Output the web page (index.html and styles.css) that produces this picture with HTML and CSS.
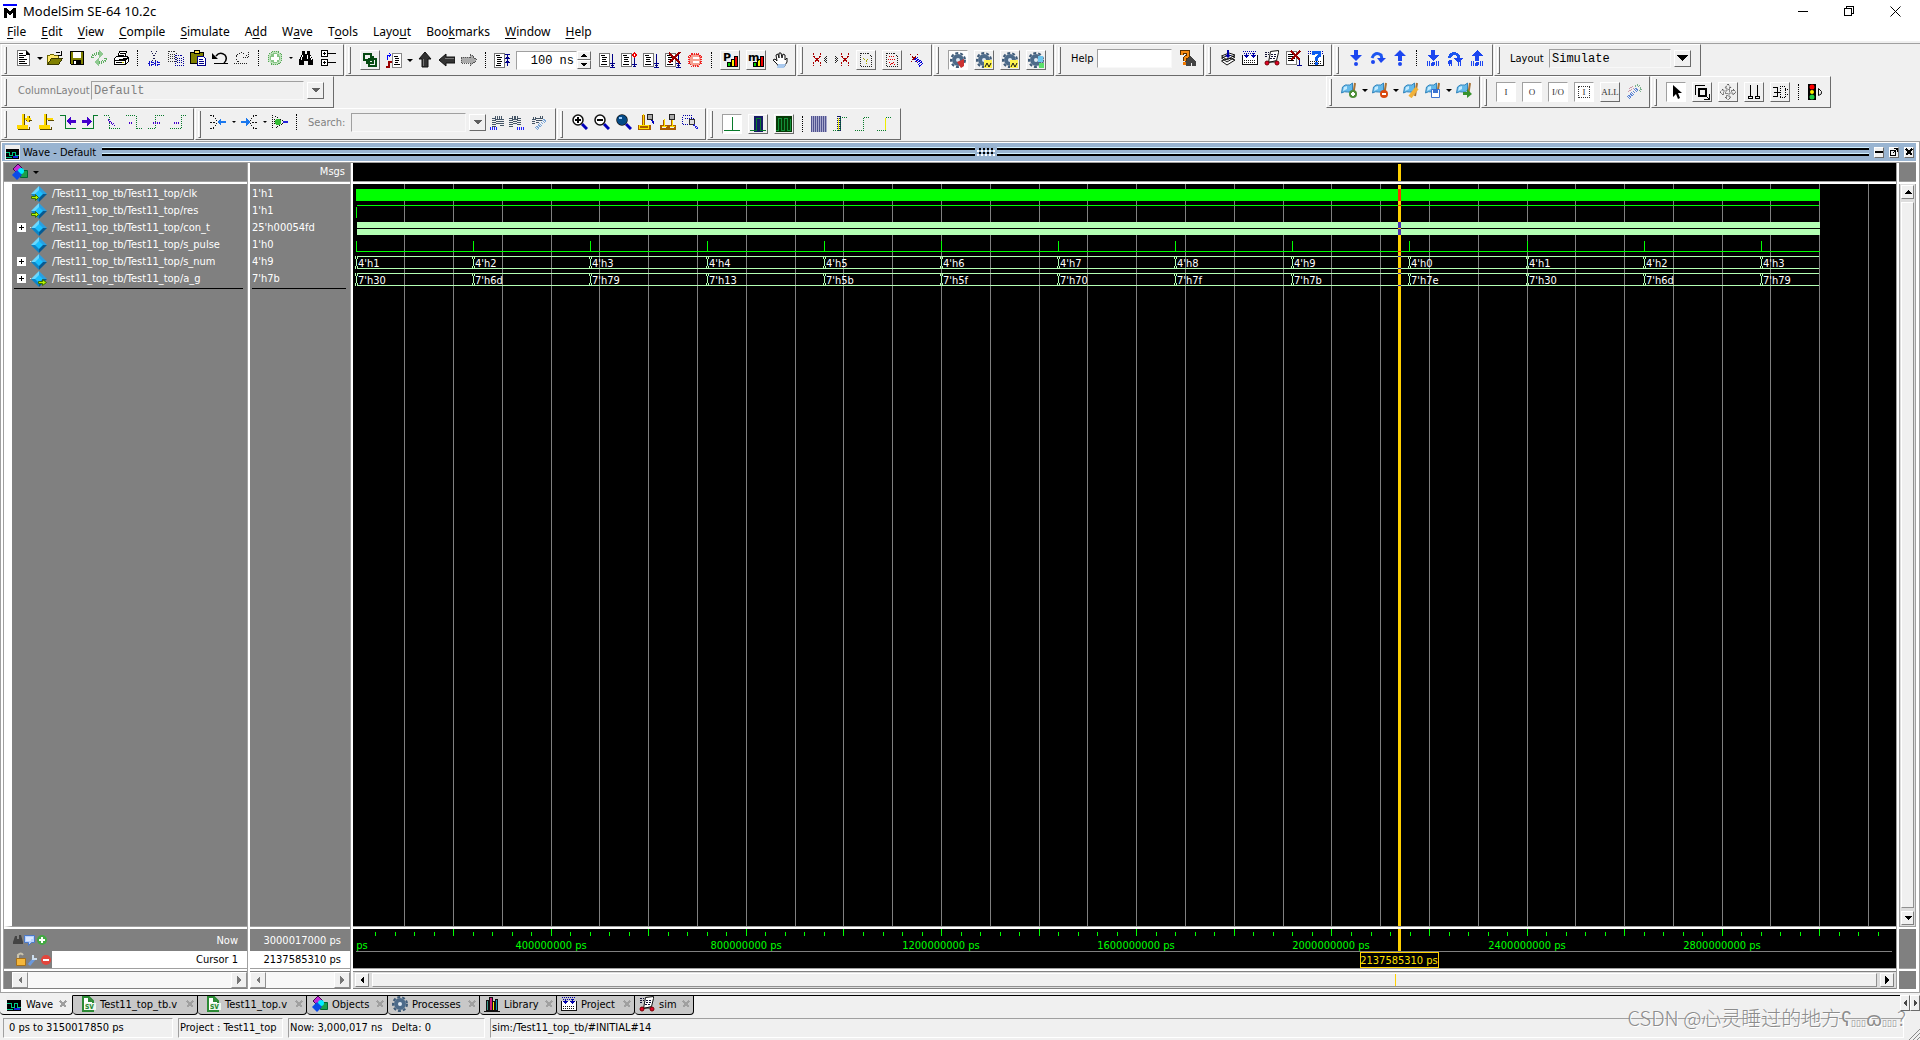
FILE: index.html
```html
<!DOCTYPE html>
<html lang="en">
<head>
<meta charset="utf-8">
<title>ModelSim SE-64 10.2c</title>
<link rel="stylesheet" href="styles.css">
</head>
<body>
<svg class="sprite" aria-hidden="true">
  <symbol id="new" viewBox="0 0 16 16"><path fill="#fff" stroke="#777" d="M1.500.5h9l3 3v12h-12z"/><path stroke="#000" d="M3 3.500h4M3 5.500h7M3 7.500h5M3 9.500h8M3 11.500h6M3 13.500h8M10.500 1v3H14"/></symbol>
  <symbol id="open" viewBox="0 0 16 16"><path fill="#ffe96a" stroke="#6b6400" d="M.5 14.500v-9h2l1-1h3l1 1h4v3"/><path fill="#808000" stroke="#3a3900" d="M.5 14.500l4-6h11l-4 6z"/><path fill="none" stroke="#000" d="M8.500 3.500q2-3 5 0M14.500 1v4h-4"/></symbol>
  <symbol id="save" viewBox="0 0 16 16"><path fill="#808000" stroke="#000" d="M1.500 1.500h13v13h-12l-1-1z"/><path fill="#fff" d="M4 2h8v6H4z"/><path fill="#000" d="M4 10h8v5H4z"/><path fill="#fff" d="M5 11h2v3H5z"/></symbol>
  <symbol id="refresh" viewBox="0 0 16 16"><path fill="none" stroke="#5fae62" stroke-width="3" stroke-dasharray="1 1" d="M1 8q2-6 9-4M15 8q-2 6-9 4"/><path fill="#8fc991" d="M8 0l5 4-5 4zM8 16l-5-4 5-4z"/></symbol>
  <symbol id="print" viewBox="0 0 16 16"><path fill="#fff" stroke="#000" d="M4.500 7.500l2-6h7l-2 6M1.500 8.500l2-2h10l2 1v4l-3 3h-11z"/><path stroke="#000" d="M7 3.500h5M6 5.500h5M1 10.500h11l3-3M12.500 10v4M3 12.500h8"/><path fill="#cc0" d="M9 12h2v1H9z"/></symbol>
  <symbol id="cut" viewBox="0 0 16 16"><g fill="none" stroke="#1b1b4e" stroke-dasharray="1 1"><path d="M5.500 1l4 10M10.500 1l-4 10"/><path stroke="#11c" stroke-width="2" d="M3 12h4v3H3zM9 12h4v3H9z"/></g></symbol>
  <symbol id="copy" viewBox="0 0 16 16"><g fill="none" stroke-dasharray="1 1"><path stroke="#333" d="M.5 1.500h6l2 2v8h-8zM2 4.500h5M2 6.500h5M2 8.500h5"/><path stroke="#009" d="M7.500 5.500h6l2 2v8h-8zM9 8.500h5M9 10.500h5M9 12.500h5"/></g></symbol>
  <symbol id="paste" viewBox="0 0 16 16"><path fill="#808000" stroke="#000" d="M.5 2.500h13v11H.5z"/><path fill="#ffe14a" stroke="#000" d="M4.500.5h5v3h-5z"/><path fill="#fff" stroke="#008" d="M7.500 6.500h6l2 2v7h-8z"/><path stroke="#008" d="M9 9.500h4M9 11.500h5M9 13.500h5"/></symbol>
  <symbol id="undo" viewBox="0 0 16 16"><path fill="none" stroke="#000" stroke-width="1.500" d="M4 6q4-5 9-1 3 4-1 8"/><path d="M0 3v6h6zM2 13h14v1H2z"/></symbol>
  <symbol id="redo" viewBox="0 0 16 16"><g fill="none" stroke="#222" stroke-dasharray="1 1"><path d="M13 6q-4-5-9-2-4 5 1 8M9 7.500h6M14.500 2v6M0 13.500h14"/></g></symbol>
  <symbol id="plus" viewBox="0 0 16 16"><circle cx="8" cy="8" r="7" fill="#bfe3bd" stroke="#56a556" stroke-dasharray="1 1"/><circle cx="8" cy="8" r="5" fill="#86c485"/><path stroke="#fff" stroke-width="3" d="M8 4v8M4 8h8"/></symbol>
  <symbol id="find" viewBox="0 0 16 16"><path d="M4 1h3v3h2V1h3v3l3 6v5h-5v-4H6v4H1v-5l3-6z"/><path stroke="#fff" d="M4.500 5L3 10M9.500 5v4M12.500 6l1 4"/></symbol>
  <symbol id="tree" viewBox="0 0 16 16"><path fill="#fff" stroke="#000" d="M1.500.5h6v6h-6zM1.500 9.500h6v6h-6z"/><path stroke="#000" d="M3 3.500h3M4.500 2v3M3 12.500h3M4.500 11v3M8 3.500h8M8 12.500h8"/></symbol>
  <symbol id="compile" viewBox="0 0 16 16"><g fill="none" stroke="#064a12" stroke-width="2"><path d="M2 2h7v6H2zM7 7h7v7H7zM5 8v3h6V5H9"/></g></symbol>
  <symbol id="env" viewBox="0 0 16 16"><path fill="#fff" stroke="#888" d="M6.500 1.500h9v14h-9z"/><path stroke="#000" d="M8 4.500h4M9 6.500h4M9 8.500h4M9 10.500h3M8 12.500h6"/><path fill="none" stroke="#00f" d="M1.500 8V3h3M3 1l2 2-2 2"/><path fill="none" stroke="#900" stroke-width="2" d="M0 15h3v-5h3"/></symbol>
  <symbol id="up" viewBox="0 0 16 16"><path fill="#333" stroke="#111" d="M8 0l6 7h-3v8H5V7H2z"/><path stroke="#777" d="M6.500 7v7"/></symbol>
  <symbol id="left" viewBox="0 0 16 16"><path fill="#333" stroke="#111" d="M0 8l7-6v3h9v6H7v3z"/><path stroke="#777" d="M6 6.500h9"/></symbol>
  <symbol id="right" viewBox="0 0 16 16"><path fill="#aaa" stroke="#555" stroke-dasharray="1 1" d="M16 8L9 2v3H0v6h9v3z"/></symbol>
  <symbol id="restart" viewBox="0 0 16 16"><path fill="#fff" stroke="#777" d="M.5 1.500h10v14H.5z"/><path stroke="#000" d="M2 3.500h4M3 5.500h5M3 7.500h4M3 9.500h5M3 11.500h4M2 13.500h5"/><path stroke="#008" d="M13.500 2v12M11 2.500h5M11 6.500h5M12 5.500h3M12 9.500h3M11 10.500h5"/></symbol>
  <symbol id="run" viewBox="0 0 16 16"><path fill="#fff" stroke="#777" d="M.5 1.500h10v13H.5z"/><path stroke="#000" d="M2 3.500h4M3 5.500h5M3 7.500h4M3 9.500h5M2 12.500h6"/><path stroke="#008" d="M13.500 2v13M11 11.500h5M12 13.500h3M11 15.500h5"/></symbol>
  <symbol id="cont" viewBox="0 0 16 16"><path fill="#fff" stroke="#777" d="M.5 1.500h10v13H.5z"/><path stroke="#000" d="M2 3.500h4M3 5.500h5M3 7.500h4M3 9.500h5M2 12.500h6"/><path fill="#fff" stroke="#e00" d="M13.500 1l2 2-2 2-2-2z"/><path stroke="#008" d="M13.500 6v9M11 12.500h5M12 14.500h3"/></symbol>
  <symbol id="runx" viewBox="0 0 16 16"><use href="#run"/><path stroke="#900" stroke-width="2" d="M4 1l11 10M15 0L4 11"/></symbol>
  <symbol id="break" viewBox="0 0 16 16"><path fill="#f5a090" stroke="#e22" stroke-dasharray="1 1" stroke-width="2" d="M5 2h6l3 3v6l-3 3H5l-3-3V5z"/><path stroke="#fff" stroke-width="2" d="M6 6h6M6 10h6"/></symbol>
  <symbol id="bargraph" viewBox="0 0 16 16"><path fill="#0c0" stroke="#000" d="M5.500 10.500h3v4h-3z"/><path fill="#fe0" stroke="#000" d="M9.500 7.500h3v7h-3z"/><path fill="#e00" stroke="#000" d="M12.500 4.500h3v10h-3z"/></symbol>
  <symbol id="prof" viewBox="0 0 16 16"><use href="#bargraph"/><text class="big" x="1" y="9">P</text></symbol>
  <symbol id="mem" viewBox="0 0 16 16"><use href="#bargraph"/><text class="big" x="0" y="9">m</text></symbol>
  <symbol id="hand" viewBox="0 0 16 16"><path fill="#fff" stroke="#111" d="M5 12L1 8l2-1 2 2-1-6 2-1 1 4V1h2l1 5 1-4 2 1v5l2-2v4l-3 5H7z"/><path fill="#a9c9ee" d="M6 12h8l-2 4H5z"/></symbol>
  <symbol id="xleft" viewBox="0 0 16 16"><path fill="none" stroke="#a00" stroke-dasharray="2 1" d="M1.500 1v3l7 7v3M8.500 1v3l-7 7v3"/><path stroke="#222" stroke-dasharray="1 1" d="M14.500 4v8M13.500 5v5M12.500 6v3"/></symbol>
  <symbol id="xright" viewBox="0 0 16 16"><path fill="none" stroke="#a00" stroke-dasharray="2 1" d="M7.500 1v3l7 7v3M14.500 1v3l-7 7v3"/><path stroke="#222" stroke-dasharray="1 1" d="M1.500 4v8M2.500 5v5M3.500 6v3"/></symbol>
  <symbol id="docq" viewBox="0 0 16 16"><path fill="none" stroke="#222" stroke-dasharray="1 1" d="M2.500 1.500h8l3 3v10h-11z"/><path fill="none" stroke="#aa0" stroke-dasharray="1 1" d="M5 6l3 3 3-3M8 9v4"/></symbol>
  <symbol id="docx" viewBox="0 0 16 16"><path fill="none" stroke="#222" stroke-dasharray="1 1" d="M2.500 1.500h8l3 3v10h-11z"/><path stroke="#d00" stroke-dasharray="1 1" d="M5 4.500h5M4 7.500h8M5 10l6 3M10 10l-4 3"/></symbol>
  <symbol id="xpen" viewBox="0 0 16 16"><path stroke="#900" stroke-dasharray="2 1" d="M2 2l8 9M10 2L2 11"/><path stroke="#00d" stroke-width="5" stroke-dasharray="1 1" d="M8 6l6 8"/></symbol>
  <symbol id="gear" viewBox="0 0 16 16"><circle cx="8" cy="8" r="7" fill="none" stroke="#3f5b78" stroke-width="2" stroke-dasharray="3 2"/><circle cx="8" cy="8" r="4" fill="#dfe9f2" stroke="#4d6b8a" stroke-width="4"/></symbol>
  <symbol id="gearr" viewBox="0 0 16 16"><use href="#gear"/><path fill="#c33" d="M7 10l7-3v7l-3 2z"/></symbol>
  <symbol id="geary" viewBox="0 0 16 16"><use href="#gear"/><path fill="#fff34d" d="M8 8h8v8H8z"/><path fill="none" stroke="#111" d="M9 15l2-4 2 4 2-4"/></symbol>
  <symbol id="gearg" viewBox="0 0 16 16"><use href="#gear"/><path fill="#6ec6ee" d="M10 4h5v6h-5z"/><path fill="#5be06a" d="M11 11h5v5h-5z"/></symbol>
  <symbol id="helpfind" viewBox="0 0 16 16"><path fill="#444" d="M7 5h3l1 2h1l4 5v4h-4v-3h-1v3H7l-3-1z"/><path fill="none" stroke="#5a3000" stroke-width="4" d="M2 5V2h6v4L5 8v3"/><path fill="none" stroke="#f88a10" stroke-width="2" d="M2 5V2h6v4L5 8v3"/><path fill="#f07800" d="M3 12h3v3H3z"/></symbol>
  <symbol id="stack" viewBox="0 0 16 16"><path fill="#fff" stroke="#111" d="M1.500 11L9 8l6 2-8 5zM1.500 8L9 5l6 2-8 5zM1.500 6L9 3l6 2-8 5z"/><path stroke="#00a" stroke-width="2" d="M8 0v6"/><path fill="#00a" d="M5 5h6L8 8z"/></symbol>
  <symbol id="proj" viewBox="0 0 16 16"><path fill="#fff" stroke="#111" d="M.5 5v9.500h15V5"/><path stroke="#00a" stroke-dasharray="1 1" d="M1 1.500h14M2 3.500h12"/><path fill="#00a" d="M4 3h1v2h2L4.500 8 2 5h2zM11 3h1v2h2l-2.500 3L9 5h2z"/><path stroke="#111" stroke-dasharray="1 1" d="M2 10.500h12M2 12.500h12"/></symbol>
  <symbol id="simi" viewBox="0 0 16 16"><path fill="#fff" stroke="#111" d="M6.500 1.500l8-1v2l-2 8-8 2z"/><path stroke="#113" stroke-dasharray="2 1" d="M1 2.500h4M1 4.500h4M1 6.500h3M7 4.500h6M7 6.500h5M6 8.500h6"/><path stroke="#111" d="M2 12h12"/><g fill="#e0002a" stroke="#700"><circle cx="3" cy="13" r="2"/><circle cx="13" cy="13" r="2"/></g></symbol>
  <symbol id="endsim" viewBox="0 0 16 16"><path fill="#fff" stroke="#777" d="M.5 1.500h10v13H.5z"/><path stroke="#000" d="M2 4.500h7M2 6.500h6M2 8.500h7M2 10.500h6"/><path stroke="#900" stroke-width="2" d="M5 1l9 9M14 1l-9 9"/><path stroke="#008" d="M13.500 10v5M11 15.500h5"/></symbol>
  <symbol id="what" viewBox="0 0 16 16"><path fill="#fff" stroke="#111" d="M.5 5v10.500h15V5"/><path stroke="#00a" stroke-dasharray="1 1" d="M0 1.500h16M0 3.500h16"/><path stroke="#111" stroke-dasharray="1 1" d="M2 11.500h12M2 13.500h12"/><path fill="none" stroke="#0a5cf0" stroke-width="3" d="M5 5V2h6v4L8 8v3"/><path fill="#0a5cf0" d="M7 12h3v3H7z"/></symbol>
  <symbol id="into" viewBox="0 0 16 16"><path fill="#1c46f0" d="M6 0h4v5h4l-6 6-6-6h4z"/><circle cx="8" cy="14" r="2" fill="#1c46f0"/></symbol>
  <symbol id="over" viewBox="0 0 16 16"><path fill="none" stroke="#1c56f0" stroke-width="3" d="M2 8q3-7 9-3l1 4"/><path fill="#1c46f0" d="M7 8h9l-5 5z"/><circle cx="3" cy="12" r="2" fill="#1c46f0"/></symbol>
  <symbol id="out" viewBox="0 0 16 16"><path fill="#1c46f0" d="M8 0l6 6h-4v5H6V6H2z"/><circle cx="8" cy="14" r="2" fill="#1c46f0"/></symbol>
  <symbol id="bars" viewBox="0 0 16 16"><path stroke="#1c46f0" d="M2.500 11v5M4.500 11v5M11.500 11v5M13.500 11v5"/></symbol>
  <symbol id="flag" viewBox="0 0 16 16"><path fill="#63b9ea" stroke="#3484bb" d="M1.500 5q3-3 5-2t5-2v7q-2 3-5 2t-6 1z"/><path fill="#c5ebff" d="M3 5l3-1v3L2 9z"/><path stroke="#a87335" stroke-width="2" d="M14 1l-2 13"/></symbol>
  <symbol id="flagp" viewBox="0 0 16 16"><use href="#flag"/><circle cx="12" cy="12" r="4" fill="#4b8d35"/><path stroke="#fff" stroke-width="2" d="M12 10v4M10 12h4"/></symbol>
  <symbol id="flagm" viewBox="0 0 16 16"><use href="#flag"/><circle cx="12" cy="12" r="4" fill="#d9480f"/><path stroke="#fff" stroke-width="2" d="M10 12h4"/></symbol>
  <symbol id="flage" viewBox="0 0 16 16"><use href="#flag"/><path stroke="#f1b23a" stroke-width="4" d="M7 15l7-9"/></symbol>
  <symbol id="flags" viewBox="0 0 16 16"><use href="#flag"/><path fill="#fff" stroke="#3b73d1" d="M6.500 7.500h8v8h-8z"/><path fill="#3b73d1" d="M8 8h5v3H8z"/></symbol>
  <symbol id="flagg" viewBox="0 0 16 16"><use href="#flag"/><path fill="#37922d" d="M7 10h4V7l5 5-5 4v-3H7z"/></symbol>
  <symbol id="wrench" viewBox="0 0 16 16"><path stroke="#5d86d6" stroke-width="4" stroke-dasharray="1 1" d="M2 14l9-9"/><path fill="none" stroke="#7bb28c" stroke-width="2" stroke-dasharray="1 1" d="M9 2l3-1 3 3-1 4"/><path stroke="#c9a" stroke-dasharray="1 1" d="M3 5l5-4M2 8l7-5"/></symbol>
  <symbol id="arrow" viewBox="0 0 16 16"><path d="M5 1v12l3-3 2 5 2-1-2-5h4z"/></symbol>
  <symbol id="zoommode" viewBox="0 0 16 16"><path fill="none" stroke="#000" stroke-width="2" d="M5 5h7v7H5z"/><path fill="none" stroke="#000" d="M1.500 11V1.500H11M10 15.500h5.500V10M11 11l4 4"/></symbol>
  <symbol id="pan" viewBox="0 0 16 16"><path fill="none" stroke="#222" stroke-dasharray="1 1" d="M8 0l3 4H9v3h4V5l3 3-3 3V9H9v4h2l-3 3-3-3h2V9H3v2L0 8l3-3v2h4V4H5z"/></symbol>
  <symbol id="two" viewBox="0 0 16 16"><path fill="none" stroke="#000" d="M4.500 1v11M2.500 12.500h4v2h-4zM11.500 1v11M9.500 12.500h4v2h-4z"/></symbol>
  <symbol id="edit2" viewBox="0 0 16 16"><path fill="none" stroke="#000" d="M1 3.500h4v9H1M2 8h6"/><path fill="none" stroke="#000" stroke-dasharray="1 1" d="M8 2.500h5v11H8zM13 5.500h3M13 10.500h3"/></symbol>
  <symbol id="light" viewBox="0 0 16 16"><path d="M1 0h8v16H1z"/><circle cx="5" cy="3" r="2.500" fill="red"/><circle cx="5" cy="8" r="2" fill="#fe0"/><circle cx="5" cy="13" r="2.500" fill="#2c4"/><path fill="none" stroke="#111" d="M11.500 4.500v7q4-1 3-4z"/></symbol>
  <symbol id="curp" viewBox="0 0 16 16"><path fill="none" stroke="#5b4a00" d="M8 0v11M2 15.500h11v-3M10 6.500h6M13.500 2v6"/><path fill="none" stroke="#ffd800" stroke-width="2" d="M7 0v11M2 12h9v2H2zM9 5h6M12 2v6"/></symbol>
  <symbol id="curm" viewBox="0 0 16 16"><path fill="none" stroke="#5b4a00" d="M8 0v11M2 15.500h11v-3M10 6.500h6"/><path fill="none" stroke="#ffd800" stroke-width="2" d="M7 0v11M2 12h9v2H2zM9 5h6"/></symbol>
  <symbol id="prev" viewBox="0 0 16 16"><path fill="none" stroke="#077a2a" d="M0 1.500h5v13h11"/><path fill="#40c" d="M6 7l5-4v3h5v3h-5v3z"/></symbol>
  <symbol id="next" viewBox="0 0 16 16"><path fill="none" stroke="#077a2a" d="M0 14.500h11v-13h5"/><path fill="#40c" d="M10 7L5 3v3H0v3h5v3z"/></symbol>
  <symbol id="fall" viewBox="0 0 16 16"><g fill="none" stroke="#077a2a" stroke-dasharray="1 1"><path d="M0 1.500h5v13h11"/><path stroke="#40c" stroke-width="2" d="M4 6l7 6"/></g></symbol>
  <symbol id="fall2" viewBox="0 0 16 16"><g fill="none" stroke="#077a2a" stroke-dasharray="1 1"><path d="M0 1.500h10v13h6"/><path stroke="#40c" stroke-width="2" d="M3 9h4"/></g></symbol>
  <symbol id="rise" viewBox="0 0 16 16"><g fill="none" stroke="#077a2a" stroke-dasharray="1 1"><path d="M0 14.500h7v-13h9"/><path stroke="#40c" stroke-width="2" d="M5 9h7"/></g></symbol>
  <symbol id="rise2" viewBox="0 0 16 16"><g fill="none" stroke="#077a2a" stroke-dasharray="1 1"><path d="M0 14.500h11v-13h5"/><path stroke="#40c" stroke-width="2" d="M4 9h6"/></g></symbol>
  <symbol id="exp" viewBox="0 0 16 16"><path fill="none" stroke="#111" stroke-dasharray="2 1" d="M0 1.500h3l4 5M0 14.500h3l4-5M0 8h6"/><path fill="#1b78ee" d="M7 8l4-4v3h5v2h-5v3z"/></symbol>
  <symbol id="col" viewBox="0 0 16 16"><path fill="none" stroke="#111" stroke-dasharray="2 1" d="M16 1.500h-3l-4 5M16 14.500h-3l-4-5M16 8h-6"/><path fill="#1b78ee" d="M9 8L5 4v3H0v2h5v3z"/></symbol>
  <symbol id="ring" viewBox="0 0 16 16"><path fill="none" stroke="#111" stroke-dasharray="1 1" d="M.5 1v14M3 2l4 2 5 4-5 4-4 2M2 5v6"/><circle cx="6" cy="8" r="3" fill="#3b3"/><path fill="#22d" d="M11 7h5v2h-5z"/></symbol>
  <symbol id="bino" viewBox="0 0 16 16"><path fill="none" stroke="#456" stroke-width="4" stroke-dasharray="1 1" d="M4 13V4h4v7M12 12V4H8"/><path stroke="#22f" stroke-width="3" stroke-dasharray="1 1" d="M0 14h7"/></symbol>
  <symbol id="binor" viewBox="0 0 16 16"><path fill="none" stroke="#456" stroke-width="4" stroke-dasharray="1 1" d="M3 13V4h4v7M11 11V4H7"/><path stroke="#22f" stroke-width="3" stroke-dasharray="1 1" d="M9 14h7"/></symbol>
  <symbol id="binow" viewBox="0 0 16 16"><path fill="none" stroke="#456" stroke-width="3" stroke-dasharray="1 1" d="M2 10V4h4v5M9 7V3h3"/><path stroke="#79a6d8" stroke-width="3" stroke-dasharray="1 1" d="M5 15l9-9"/></symbol>
  <symbol id="lens" viewBox="0 0 16 16"><path stroke="#00b" stroke-width="3" d="M10 10l5 5"/><circle cx="6" cy="6" r="5" fill="#fff" stroke="#111" stroke-width="1.500"/></symbol>
  <symbol id="zin" viewBox="0 0 16 16"><use href="#lens"/><path stroke="#000" stroke-width="2" d="M6 3v6M3 6h6"/></symbol>
  <symbol id="zout" viewBox="0 0 16 16"><use href="#lens"/><path stroke="#000" stroke-width="2" d="M3 6h6"/></symbol>
  <symbol id="zfull" viewBox="0 0 16 16"><use href="#lens"/><circle cx="6" cy="6" r="5" fill="#054a86"/><path fill="#9cf" d="M3 3h3v2H3z"/></symbol>
  <symbol id="zcur" viewBox="0 0 16 16"><path fill="none" stroke="#a85b00" stroke-width="3" d="M5 1v10M1 12h10v3H1z"/><path fill="none" stroke="#ffe000" d="M5.500 0v11M1.500 11.500h9v3h-9z"/><circle cx="12" cy="3" r="3" fill="#aaa" stroke="#222"/><path stroke="#00b" stroke-width="2" d="M14 6l2 4"/></symbol>
  <symbol id="ztwo" viewBox="0 0 16 16"><path fill="none" stroke="#a85b00" stroke-width="2" d="M4 6v6M1 12h6v3H1zM12 6v6M9 12h6v3H9z"/><path fill="none" stroke="#ffe000" d="M4.500 5v7M1.500 12.500h5M12.500 5v7M9.500 12.500h5"/><circle cx="12" cy="3" r="3" fill="#aaa" stroke="#222"/></symbol>
  <symbol id="zbox" viewBox="0 0 16 16"><path fill="none" stroke="#00a" stroke-dasharray="1 1" d="M.5 1.500h9v9h-9zM3 4h9"/><circle cx="10" cy="8" r="3" fill="#ddd" stroke="#333"/><path stroke="#22d" stroke-width="2" stroke-dasharray="1 1" d="M12 11l4 4"/></symbol>
  <symbol id="w1" viewBox="0 0 16 16"><path stroke="#077a2a" d="M0 14.500h16M8.500 1v13"/></symbol>
  <symbol id="w2" viewBox="0 0 16 16"><path fill="#161a66" d="M4 0h9v16H4z"/><path fill="none" stroke="#077a2a" d="M0 14.500h6.500v-12h4v12H16"/></symbol>
  <symbol id="w3" viewBox="0 0 16 16"><path fill="#053a05" d="M0 0h16v16H0z"/><path fill="none" stroke="#13913a" d="M0 14.500h2.500v-12h3v12h3v-12h3v12h3v-12"/></symbol>
  <symbol id="w4" viewBox="0 0 16 16"><path fill="#a9aace" d="M0 0h16v16H0z"/><path stroke="#161a66" stroke-width="16" stroke-dasharray="1 1" opacity=".6" d="M0 8h16"/></symbol>
  <symbol id="w5" viewBox="0 0 16 16"><path stroke="#161a66" stroke-width="4" stroke-dasharray="1 1" d="M6 0v16"/><path fill="none" stroke="#077a2a" stroke-dasharray="1 1" d="M0 14.500h7v-13h7"/><path stroke="#ee0" d="M5.500 2v12"/></symbol>
  <symbol id="w6" viewBox="0 0 16 16"><path fill="none" stroke="#077a2a" stroke-dasharray="1 1" d="M0 14.500h8v-13h7"/></symbol>
  <symbol id="w7" viewBox="0 0 16 16"><path fill="none" stroke="#077a2a" stroke-dasharray="1 1" d="M0 14.500h8v-13h7"/><path stroke="#ee0" d="M8.500 2v12"/></symbol>
  <symbol id="wave" viewBox="0 0 16 16"><path fill="#eee" d="M0 0h16v16H0z"/><path d="M1 4h14v11H1z"/><path fill="none" stroke="#0c8" d="M1 7.500h4v4h3v-4h3v4h4M1 13.500h6"/><path stroke="#12d" stroke-width="2" d="M8 13h6"/></symbol>
  <symbol id="objs" viewBox="0 0 16 16"><path fill="#c42bd6" stroke="#400a50" d="M6 0l5 5-5 5-5-5z"/><path fill="#1ca04a" stroke="#063" d="M8.500 6.500h7v7h-7z"/><circle cx="9" cy="7" r="3" fill="#0ef"/><path fill="#0a4be8" d="M5 6l5 5-5 5-5-5z"/></symbol>
  <symbol id="sig" viewBox="0 0 16 16"><path fill="#6ad8ff" d="M8 0L0 8h8z"/><path fill="#2a9fe0" d="M8 0l8 8H8z"/><path fill="#0c84c6" d="M0 8l8 8V8z"/><path fill="#075a92" d="M16 8l-8 8V8z"/><path fill="#19c0ff" d="M8 4l4 4-4 4-4-4z"/></symbol>
  <symbol id="sigin" viewBox="0 0 16 16"><use href="#sig"/><path fill="#b4f400" stroke="#3d6e00" d="M.5 10.500h4v-2l3 3-3 3v-2h-4z"/></symbol>
  <symbol id="sigout" viewBox="0 0 16 16"><use href="#sig"/><path fill="#b4f400" stroke="#3d6e00" d="M7.500 10.500h4v-2l4 3-4 3v-2h-4z"/></symbol>
  <symbol id="sv" viewBox="0 0 16 16"><path fill="#fff" stroke="#2c8a35" stroke-width="2" d="M3 1h6l4 4v10H3z"/><path fill="#2c8a35" d="M8 1l5 5H8z"/><path fill="#eef8ee" d="M5 7h11v7H5z"/><text class="svt" x="5" y="13">sv</text></symbol>
  <symbol id="lib" viewBox="0 0 16 16"><path stroke="#111" d="M0 15h16"/><path fill="#3a9a8a" stroke="#111" d="M2.500 4.500h2v10h-2z"/><path fill="#d0207a" stroke="#111" d="M5.500 1.500h3v13h-3z"/><path fill="#fe0" stroke="#111" d="M8.500 5.500h2v9h-2z"/><path fill="#19b" stroke="#111" d="M11.500 3.500h2v11h-2z"/></symbol>
  <symbol id="x" viewBox="0 0 8 8"><path stroke="#a0a0a0" stroke-width="2" d="M1 1l6 6M7 1L1 7"/></symbol>
  <symbol id="dn" viewBox="0 0 8 8"><path d="M0 2h8L4 6z"/></symbol>
  <symbol id="tl" viewBox="0 0 8 8"><path d="M6 0v8L2 4z"/></symbol>
  <symbol id="tr" viewBox="0 0 8 8"><path d="M2 0v8l4-4z"/></symbol>
  <symbol id="tu" viewBox="0 0 8 8"><path d="M0 6h8L4 2z"/></symbol>
  <symbol id="bx" viewBox="0 0 5 13"><path fill="none" stroke="#b4ffb4" d="M1.500 0v3M3.500 0v3M2.500 3v7M1.500 10v3M3.500 10v3"/></symbol>
</svg>

<header class="titlebar">
  <svg class="logo" viewBox="0 0 14 14"><path fill="#00f" d="M0 0h14v2H0z"/><path d="M1 14V4h3l3 4 3-4h3v10h-3V8l-3 4-3-4v6z"/></svg>
  <h1>ModelSim SE-64 10.2c</h1>
  <div class="winctl">
    <button aria-label="Minimize"><svg viewBox="0 0 11 11"><path fill="none" stroke="#000" d="M0 5.500h10"/></svg></button>
    <button aria-label="Restore"><svg viewBox="0 0 11 11"><path fill="none" stroke="#000" d="M.5 2.500h7v7h-7zM2.500 2V.5h7v7H8"/></svg></button>
    <button aria-label="Close"><svg class="smooth" viewBox="0 0 11 11"><path fill="none" stroke="#000" d="M.5.5l10 10M10.500.5l-10 10"/></svg></button>
  </div>
</header>
<nav class="menu">
  <button><u>F</u>ile</button><button><u>E</u>dit</button><button><u>V</u>iew</button><button><u>C</u>ompile</button><button><u>S</u>imulate</button><button>A<u>d</u>d</button><button>W<u>a</u>ve</button><button>T<u>o</u>ols</button><button>Layo<u>u</u>t</button><button>Boo<u>k</u>marks</button><button><u>W</u>indow</button><button><u>H</u>elp</button>
</nav>

<div class="tools">
  <div class="row">
    <div class="bar high"><i class="grip"></i>
      <button class="ic" aria-label="New"><svg><use href="#new"/></svg></button><button class="car" aria-label="New menu"></button><button class="ic" aria-label="Open"><svg><use href="#open"/></svg></button><button class="ic" aria-label="Save"><svg><use href="#save"/></svg></button><button class="ic" aria-label="Reload"><svg><use href="#refresh"/></svg></button><button class="ic" aria-label="Print"><svg><use href="#print"/></svg></button><i class="sep"></i><button class="ic" aria-label="Cut"><svg><use href="#cut"/></svg></button><button class="ic" aria-label="Copy"><svg><use href="#copy"/></svg></button><button class="ic" aria-label="Paste"><svg><use href="#paste"/></svg></button><button class="ic" aria-label="Undo"><svg class="smooth"><use href="#undo"/></svg></button><button class="ic" aria-label="Redo"><svg><use href="#redo"/></svg></button><i class="sep"></i><button class="ic" aria-label="Add"><svg><use href="#plus"/></svg></button><button class="car dim" aria-label="Add menu"></button><button class="ic" aria-label="Find"><svg><use href="#find"/></svg></button><button class="ic" aria-label="Collapse all"><svg><use href="#tree"/></svg></button>
    </div>
    <div class="bar"><i class="grip"></i>
      <button class="rb" aria-label="Compile"><svg><use href="#compile"/></svg></button><button class="ic" aria-label="Environment"><svg><use href="#env"/></svg></button><button class="car" aria-label="Environment menu"></button><button class="ic" aria-label="Up"><svg class="smooth"><use href="#up"/></svg></button><button class="ic" aria-label="Back"><svg class="smooth"><use href="#left"/></svg></button><button class="ic" aria-label="Forward"><svg><use href="#right"/></svg></button><i class="sep"></i><button class="ic" aria-label="Restart"><svg><use href="#restart"/></svg></button><input class="runlen" aria-label="Run length" value="100 ns"><span class="spin"><button aria-label="More"><svg><use href="#tu"/></svg></button><button aria-label="Less"><svg><use href="#dn"/></svg></button></span><button class="ic" aria-label="Run"><svg><use href="#run"/></svg></button><button class="ic" aria-label="Continue run"><svg><use href="#cont"/></svg></button><button class="ic" aria-label="Run all"><svg><use href="#run"/></svg></button><button class="ic" aria-label="Break"><svg><use href="#runx"/></svg></button><button class="ic" aria-label="Stop"><svg><use href="#break"/></svg></button><i class="sep"></i><button class="rb" aria-label="Performance profiling"><svg><use href="#prof"/></svg></button><button class="rb" aria-label="Memory profiling"><svg><use href="#mem"/></svg></button><button class="ic" aria-label="Pan"><svg class="smooth"><use href="#hand"/></svg></button>
    </div>
    <div class="bar"><i class="grip"></i>
      <button class="ic" aria-label="Previous X"><svg><use href="#xleft"/></svg></button><button class="ic" aria-label="Next X"><svg><use href="#xright"/></svg></button><button class="rb" aria-label="Explain"><svg><use href="#docq"/></svg></button><button class="rb" aria-label="Exclude"><svg><use href="#docx"/></svg></button><button class="ic" aria-label="Clear"><svg><use href="#xpen"/></svg></button>
    </div>
    <div class="bar"><i class="grip"></i>
      <button class="rb on" aria-label="Processes"><svg class="smooth"><use href="#gearr"/></svg></button><button class="rb" aria-label="Process warnings"><svg class="smooth"><use href="#geary"/></svg></button><button class="rb" aria-label="Process waits"><svg class="smooth"><use href="#geary"/></svg></button><button class="rb" aria-label="Process states"><svg class="smooth"><use href="#gearg"/></svg></button>
    </div>
    <div class="bar high help"><i class="grip"></i>
      <label for="help">Help</label><input id="help" class="helpbox"><button class="ic" aria-label="Search help"><svg><use href="#helpfind"/></svg></button>
    </div>
    <div class="bar high"><i class="grip"></i>
      <button class="ic" aria-label="Compile file"><svg class="smooth"><use href="#stack"/></svg></button><button class="ic" aria-label="Compile all"><svg><use href="#proj"/></svg></button><button class="ic" aria-label="Simulate"><svg class="smooth"><use href="#simi"/></svg></button><button class="ic" aria-label="End simulation"><svg><use href="#endsim"/></svg></button><button class="ic" aria-label="Compile help"><svg><use href="#what"/></svg></button>
    </div>
    <div class="bar high"><i class="grip"></i>
      <button class="ic" aria-label="Step into"><svg class="smooth"><use href="#into"/></svg></button><button class="ic" aria-label="Step over"><svg class="smooth"><use href="#over"/></svg></button><button class="ic" aria-label="Step out"><svg class="smooth"><use href="#out"/></svg></button><i class="sep"></i><button class="ic" aria-label="Step into current"><svg><use href="#into"/><use href="#bars"/></svg></button><button class="ic" aria-label="Step over current"><svg><use href="#over"/><use href="#bars"/></svg></button><button class="ic" aria-label="Step out current"><svg><use href="#out"/><use href="#bars"/></svg></button>
    </div>
    <div class="bar high layout"><i class="grip"></i>
      <label for="layout">Layout</label><select id="layout" class="laysel"><option>Simulate</option></select><span class="drop"><svg><use href="#dn"/></svg></span>
    </div>
  </div>
  <div class="row">
    <div class="bar high collayout"><i class="grip"></i>
      <label for="collay" class="off">ColumnLayout</label><select id="collay" class="colsel" disabled><option>Default</option></select><span class="drop off"><svg><use href="#dn"/></svg></span>
    </div>
    <div class="bar high push"><i class="grip"></i>
      <button class="ic" aria-label="Add bookmark"><svg class="smooth"><use href="#flagp"/></svg></button><button class="car" aria-label="Add bookmark menu"></button><button class="ic" aria-label="Delete bookmark"><svg class="smooth"><use href="#flagm"/></svg></button><button class="car" aria-label="Delete bookmark menu"></button><button class="ic" aria-label="Edit bookmarks"><svg class="smooth"><use href="#flage"/></svg></button><button class="ic" aria-label="Save bookmarks"><svg class="smooth"><use href="#flags"/></svg></button><button class="car" aria-label="Save bookmarks menu"></button><button class="ic" aria-label="Go to bookmark"><svg class="smooth"><use href="#flagg"/></svg></button>
    </div>
    <div class="bar"><i class="grip"></i>
      <button class="rb on glyph">I</button><button class="rb on glyph">O</button><button class="rb on glyph">I/O</button><button class="rb on glyph"><span class="dots">I</span></button><button class="rb glyph">ALL</button><button class="ic" aria-label="Filter"><svg><use href="#wrench"/></svg></button>
    </div>
    <div class="bar"><i class="grip"></i>
      <button class="rb on" aria-label="Select mode"><svg class="smooth"><use href="#arrow"/></svg></button><button class="rb" aria-label="Zoom mode"><svg><use href="#zoommode"/></svg></button><button class="rb" aria-label="Pan mode"><svg class="smooth"><use href="#pan"/></svg></button><button class="rb" aria-label="Two cursor mode"><svg><use href="#two"/></svg></button><button class="rb" aria-label="Edit mode"><svg><use href="#edit2"/></svg></button><i class="sep"></i><button class="ic" aria-label="Stop drawing"><svg class="smooth"><use href="#light"/></svg></button>
    </div>
  </div>
  <div class="row">
    <div class="bar high"><i class="grip"></i>
      <button class="ic" aria-label="Insert cursor"><svg><use href="#curp"/></svg></button><button class="ic" aria-label="Delete cursor"><svg><use href="#curm"/></svg></button><button class="ic" aria-label="Previous transition"><svg><use href="#prev"/></svg></button><button class="ic" aria-label="Next transition"><svg><use href="#next"/></svg></button><button class="ic" aria-label="Previous falling edge"><svg><use href="#fall"/></svg></button><button class="ic" aria-label="Next falling edge"><svg><use href="#fall2"/></svg></button><button class="ic" aria-label="Previous rising edge"><svg><use href="#rise"/></svg></button><button class="ic" aria-label="Next rising edge"><svg><use href="#rise2"/></svg></button>
    </div>
    <div class="bar high search"><i class="grip"></i>
      <button class="ic" aria-label="Expanded time"><svg><use href="#exp"/></svg></button><button class="car dim" aria-label="Expanded time menu"></button><button class="ic" aria-label="Collapse time"><svg><use href="#col"/></svg></button><button class="car dim" aria-label="Collapse time menu"></button><button class="ic" aria-label="Event time"><svg><use href="#ring"/></svg></button><i class="sep"></i><label for="search" class="off">Search:</label><input id="search" class="searchbox" disabled><span class="drop off"><svg><use href="#dn"/></svg></span><button class="ic near" aria-label="Search back"><svg><use href="#bino"/></svg></button><button class="ic near" aria-label="Search forward"><svg><use href="#binor"/></svg></button><button class="ic" aria-label="Search options"><svg><use href="#binow"/></svg></button>
    </div>
    <div class="bar high"><i class="grip"></i>
      <button class="ic" aria-label="Zoom in"><svg class="smooth"><use href="#zin"/></svg></button><button class="ic" aria-label="Zoom out"><svg class="smooth"><use href="#zout"/></svg></button><button class="ic" aria-label="Zoom full"><svg class="smooth"><use href="#zfull"/></svg></button><button class="ic" aria-label="Zoom on cursor"><svg><use href="#zcur"/></svg></button><button class="ic" aria-label="Zoom between cursors"><svg><use href="#ztwo"/></svg></button><button class="ic" aria-label="Zoom other"><svg><use href="#zbox"/></svg></button>
    </div>
    <div class="bar"><i class="grip"></i>
      <button class="rb on" aria-label="Edges"><svg><use href="#w1"/></svg></button><button class="rb" aria-label="Pulse"><svg><use href="#w2"/></svg></button><button class="rb" aria-label="Clock"><svg><use href="#w3"/></svg></button><i class="sep"></i><button class="ic" aria-label="Contrast all"><svg><use href="#w4"/></svg></button><button class="ic" aria-label="Contrast edge"><svg><use href="#w5"/></svg></button><button class="ic" aria-label="Rising"><svg><use href="#w6"/></svg></button><button class="ic" aria-label="Rising cursor"><svg><use href="#w7"/></svg></button>
    </div>
  </div>
</div>

<main class="window">
  <div class="caption">
    <svg class="i16"><use href="#wave"/></svg><h2>Wave - Default</h2><i class="rail"></i><i class="nub"></i><i class="rail"></i>
    <button aria-label="Collapse pane"><svg viewBox="0 0 8 8"><path d="M0 3h8v2H0z"/></svg></button><button aria-label="Undock pane"><svg viewBox="0 0 8 8"><path fill="none" stroke="#000" d="M.5 2.500h5v5h-5zM3 5l4-4M4 .5h3.500V4"/></svg></button><button aria-label="Close pane"><svg viewBox="0 0 8 8"><path stroke="#000" stroke-width="2" d="M1 1l6 6M7 1L1 7"/></svg></button>
  </div>
  <div class="panes">
    <section class="pane names">
      <div class="head"><svg class="i16 smooth"><use href="#objs"/></svg><button class="car" aria-label="Object menu"></button></div>
      <div class="body">
        <ul>
          <li><svg class="i16 smooth"><use href="#sigin"/></svg>/Test11_top_tb/Test11_top/clk</li>
          <li><svg class="i16 smooth"><use href="#sigin"/></svg>/Test11_top_tb/Test11_top/res</li>
          <li><button class="ex" aria-label="Expand con_t"></button><svg class="i16 smooth"><use href="#sig"/></svg>/Test11_top_tb/Test11_top/con_t</li>
          <li><svg class="i16 smooth"><use href="#sig"/></svg>/Test11_top_tb/Test11_top/s_pulse</li>
          <li><button class="ex" aria-label="Expand s_num"></button><svg class="i16 smooth"><use href="#sig"/></svg>/Test11_top_tb/Test11_top/s_num</li>
          <li><button class="ex" aria-label="Expand a_g"></button><svg class="i16 smooth"><use href="#sigout"/></svg>/Test11_top_tb/Test11_top/a_g</li>
        </ul>
        <div class="endline"></div>
      </div>
      <div class="foot">
        <div class="now"><svg class="trio smooth" viewBox="0 0 36 14"><path fill="#444" d="M1 9l2-6h2v3h2V2h2l2 7v2H1z"/><path fill="#b5d0ff" stroke="#4a79c8" d="M12.500 2.500h10v7h-3l-3 3v-3h-4z"/><path stroke="#fff" d="M14 5h7M14 7h5"/><circle cx="30" cy="7" r="5" fill="#43a843"/><path stroke="#fff" stroke-width="2" d="M30 4v6M27 7h6"/></svg><span>Now</span></div>
        <div class="cur"><svg class="trio smooth" viewBox="0 0 38 15"><path fill="none" stroke="#c9c3ae" stroke-width="2" d="M5 7V3q3-3 5 0"/><path fill="#f5b73b" stroke="#a5701a" d="M3.500 6.500h9v7h-9z"/><path stroke="#6a98dc" stroke-width="3" d="M16 13l5-6"/><path fill="none" stroke="#cde" stroke-width="2" d="M20 3v4h4"/><circle cx="33" cy="8" r="5" fill="#e2453c"/><path stroke="#fff" stroke-width="2" d="M30 8h6"/></svg><span>Cursor 1</span></div>
      </div>
      <div class="scroll"><div class="strip"><button disabled aria-label="Scroll left"><svg><use href="#tl"/></svg></button><i></i><button disabled aria-label="Scroll right"><svg><use href="#tr"/></svg></button></div></div>
    </section>
    <section class="pane msgs">
      <div class="head">Msgs</div>
      <div class="body">
        <ul><li>1'h1</li><li>1'h1</li><li>25'h00054fd</li><li>1'h0</li><li>4'h9</li><li>7'h7b</li></ul>
        <div class="endline"></div>
      </div>
      <div class="foot"><div class="now"><span>3000017000 ps</span></div><div class="cur"><span>2137585310 ps</span></div></div>
      <div class="scroll"><div class="strip"><button disabled aria-label="Scroll left"><svg><use href="#tl"/></svg></button><i></i><button disabled aria-label="Scroll right"><svg><use href="#tr"/></svg></button></div></div>
    </section>
    <section class="pane waves">
      <div class="head"><svg><path fill="#ffd000" d="M1045 1h3v17h-3z"/></svg></div>
      <div class="body"><svg>
        <!-- time grid, one line every 100 us -->
        <g transform="translate(.5 0)"><path stroke="#808080" d="M51 0v2000M100 0v2000M149 0v2000M198 0v2000M246 0v2000M295 0v2000M344 0v2000M393 0v2000M442 0v2000M490 0v2000M539 0v2000M588 0v2000M637 0v2000M686 0v2000M734 0v2000M783 0v2000M832 0v2000M881 0v2000M930 0v2000M978 0v2000M1027 0v2000M1076 0v2000M1125 0v2000M1174 0v2000M1222 0v2000M1271 0v2000M1320 0v2000M1369 0v2000M1417 0v2000M1466 0v2000M1515 0v2000"/></g>
        <!-- clk, res, con_t -->
        <path fill="#0f0" d="M3 5h1464v12H3zM4 21h1462v1H4zM3 23h1v11H3z"/>
        <path fill="#000" d="M3 44h1464v1H3z"/>
        <path fill="#b4ffb4" d="M4 38h1463v6H4zM4 45h1463v6H4z"/>
        <!-- s_pulse -->
        <g transform="translate(.5 .5)"><path fill="none" stroke="#0f0" d="M3 56v11H1466M120 56v11M237 56v11M354 56v11M471 56v11M588 56v11M705 56v11M822 56v11M939 56v11M1056 56v11M1174 56v11M1291 56v11M1408 56v11"/></g>
        <!-- s_num, a_g buses -->
        <path fill="#b4ffb4" d="M4 72h1462v1H4zM4 84h1462v1H4zM4 89h1462v1H4zM4 101h1462v1H4z"/>
        <g id="edges">
          <use href="#bx" x="1" y="72" width="5" height="13"/><use href="#bx" x="118" y="72" width="5" height="13"/><use href="#bx" x="235" y="72" width="5" height="13"/><use href="#bx" x="352" y="72" width="5" height="13"/><use href="#bx" x="469" y="72" width="5" height="13"/><use href="#bx" x="586" y="72" width="5" height="13"/><use href="#bx" x="703" y="72" width="5" height="13"/><use href="#bx" x="820" y="72" width="5" height="13"/><use href="#bx" x="937" y="72" width="5" height="13"/><use href="#bx" x="1054" y="72" width="5" height="13"/><use href="#bx" x="1172" y="72" width="5" height="13"/><use href="#bx" x="1289" y="72" width="5" height="13"/><use href="#bx" x="1406" y="72" width="5" height="13"/>
        </g>
        <use href="#edges" y="17"/>
        <g fill="#fff"><text x="5" y="83">4'h1</text><text x="122" y="83">4'h2</text><text x="239" y="83">4'h3</text><text x="356" y="83">4'h4</text><text x="473" y="83">4'h5</text><text x="590" y="83">4'h6</text><text x="707" y="83">4'h7</text><text x="824" y="83">4'h8</text><text x="941" y="83">4'h9</text><text x="1058" y="83">4'h0</text><text x="1176" y="83">4'h1</text><text x="1293" y="83">4'h2</text><text x="1410" y="83">4'h3</text>
        <text x="5" y="100">7'h30</text><text x="122" y="100">7'h6d</text><text x="239" y="100">7'h79</text><text x="356" y="100">7'h13</text><text x="473" y="100">7'h5b</text><text x="590" y="100">7'h5f</text><text x="707" y="100">7'h70</text><text x="824" y="100">7'h7f</text><text x="941" y="100">7'h7b</text><text x="1058" y="100">7'h7e</text><text x="1176" y="100">7'h30</text><text x="1293" y="100">7'h6d</text><text x="1410" y="100">7'h79</text></g>
        <!-- cursor 1 -->
        <path fill="#ffd000" d="M1045 1h3v2000h-3z"/>
        <path fill="#ff2f00" d="M1045 5h3v12h-3zM1045 21h3v1h-3zM1045 67h3v1h-3z"/>
        <path fill="#4b2fb4" d="M1045 38h3v6h-3zM1045 45h3v6h-3zM1045 72h3v1h-3zM1045 84h3v1h-3zM1045 89h3v1h-3zM1045 101h3v1h-3z"/>
      </svg></div>
      <div class="foot"><svg>
        <g transform="translate(.5 0)" stroke="#0f0"><path d="M100 0v7M198 0v7M295 0v7M393 0v7M490 0v7M588 0v7M686 0v7M783 0v7M881 0v7M978 0v7M1076 0v7M1174 0v7M1271 0v7M1369 0v7M1466 0v7"/>
        <path d="M22 3v4M42 3v4M61 3v4M81 3v4M120 3v4M139 3v4M159 3v4M178 3v4M217 3v4M237 3v4M256 3v4M276 3v4M315 3v4M334 3v4M354 3v4M373 3v4M412 3v4M432 3v4M451 3v4M471 3v4M510 3v4M530 3v4M549 3v4M569 3v4M608 3v4M627 3v4M647 3v4M666 3v4M705 3v4M725 3v4M744 3v4M764 3v4M803 3v4M822 3v4M842 3v4M861 3v4M900 3v4M920 3v4M939 3v4M959 3v4M998 3v4M1018 3v4M1037 3v4M1057 3v4M1096 3v4M1115 3v4M1135 3v4M1154 3v4M1193 3v4M1213 3v4M1232 3v4M1252 3v4M1291 3v4M1310 3v4M1330 3v4M1349 3v4M1388 3v4M1408 3v4M1427 3v4M1447 3v4M1486 3v4M1505 3v4M1525 3v4"/></g>
        <path fill="#808080" d="M3 22h1536v1H3z"/>
        <g fill="#0f0" text-anchor="middle"><text x="9" y="20">ps</text><text x="198" y="20">400000000 ps</text><text x="393" y="20">800000000 ps</text><text x="588" y="20">1200000000 ps</text><text x="783" y="20">1600000000 ps</text><text x="978" y="20">2000000000 ps</text><text x="1174" y="20">2400000000 ps</text><text x="1369" y="20">2800000000 ps</text></g>
        <path fill="#ffd000" d="M1045 0h3v22h-3z"/>
        <path stroke="#ffd000" d="M1007.500 23.500h78v15h-78z"/>
        <text x="1046" y="35" fill="#ffe000" text-anchor="middle">2137585310 ps</text>
      </svg></div>
      <div class="scroll"><div class="hbar"><button aria-label="Scroll left"><svg><use href="#tl"/></svg></button><div class="thumb"><i class="mark"></i></div><button aria-label="Scroll right"><svg><use href="#tr"/></svg></button></div></div>
    </section>
    <section class="pane side">
      <div class="head"></div>
      <div class="body"><div class="vbar"><button aria-label="Scroll up"><svg><use href="#tu"/></svg></button><div class="thumb"></div><button aria-label="Scroll down"><svg><use href="#dn"/></svg></button></div></div>
      <div class="foot"></div>
      <div class="scroll"></div>
    </section>
  </div>
</main>

<nav class="tabs">
  <button class="tab wv sel"><svg class="i16"><use href="#wave"/></svg>Wave<svg class="cl"><use href="#x"/></svg></button>
  <button class="tab tb"><svg class="i16 smooth"><use href="#sv"/></svg>Test11_top_tb.v<svg class="cl"><use href="#x"/></svg></button>
  <button class="tab tp"><svg class="i16 smooth"><use href="#sv"/></svg>Test11_top.v<svg class="cl"><use href="#x"/></svg></button>
  <button class="tab ob"><svg class="i16 smooth"><use href="#objs"/></svg>Objects<svg class="cl"><use href="#x"/></svg></button>
  <button class="tab pr"><svg class="i16 smooth"><use href="#gear"/></svg>Processes<svg class="cl"><use href="#x"/></svg></button>
  <button class="tab lb"><svg class="i16"><use href="#lib"/></svg>Library<svg class="cl"><use href="#x"/></svg></button>
  <button class="tab pj"><svg class="i16"><use href="#proj"/></svg>Project<svg class="cl"><use href="#x"/></svg></button>
  <button class="tab sm"><svg class="i16 smooth"><use href="#simi"/></svg>sim<svg class="cl"><use href="#x"/></svg></button>
  <i class="rest"></i>
  <button class="nudge" aria-label="Tabs left"><svg><use href="#tl"/></svg></button><button class="nudge" aria-label="Tabs right"><svg><use href="#tr"/></svg></button>
</nav>
<footer class="status">
  <span class="c1">0 ps to 3150017850 ps</span><span class="c2">Project : Test11_top</span><span class="c3">Now: 3,000,017 ns&nbsp;&nbsp; Delta: 0</span><span class="c4">sim:/Test11_top_tb/#INITIAL#14</span>
  <svg class="size smooth" viewBox="0 0 12 12"><path stroke="#8a8a8a" d="M1 12L12 1M5 12l7-7M9 12l3-3"/></svg>
  <p class="mark-text">CSDN @心灵睡过的地方ʕ<small>▯▯▯</small>ɷ<small>▯▯▯</small>?</p>
</footer>
</body>
</html>
```
FILE: styles.css
```css
* { box-sizing: border-box; }
body {
  margin: 0;
  min-height: 100vh;
  display: flex;
  flex-direction: column;
  background: #f0f0f0;
  color: #000;
  font: 11px/17px "DejaVu Sans Condensed", "Noto Sans", sans-serif;
  overflow: hidden;
}
button, input, select { font: inherit; color: inherit; margin: 0; padding: 0; border: 0; border-radius: 0; background: none; }
button { display: flex; align-items: center; justify-content: center; flex: none; }
h1, h2, p, ul { margin: 0; padding: 0; font: inherit; list-style: none; }
svg { display: block; flex: none; width: 16px; height: 16px; shape-rendering: crispEdges; }
svg.smooth, .smooth use { shape-rendering: auto; }
.sprite { position: absolute; width: 0; height: 0; }
.big { font: bold 11px "DejaVu Sans", sans-serif; fill: #000; }
.svt { font: bold 8px "DejaVu Sans Condensed", sans-serif; fill: #2c8a35; }

/* title and menu */
.titlebar { display: flex; align-items: center; height: 22px; padding: 0 2px 0 3px; background: #fff; font: 12px/22px "Noto Sans", sans-serif; }
.titlebar h1 { margin-left: 6px; flex: 1; font-size: 13px; }
.logo { width: 14px; height: 14px; }
.winctl { display: flex; }
.winctl button { width: 46px; height: 20px; }
.winctl svg { width: 11px; height: 11px; }
.menu { display: flex; gap: 15px; height: 19px; padding: 0 7px; background: #fff; font: 12px/20px "Noto Sans", sans-serif; }
.menu u { text-underline-offset: 2px; }

/* toolbars */
.tools { margin-top: 2px; border-top: 1px solid #a0a0a0; }
.row { display: flex; gap: 1px; height: 32px; padding: 0 89px 0 1px; }
.bar { display: flex; align-items: center; padding: 0 4px 0 2px; border: 1px solid #6b6b6b; border-top-color: #fff; border-left-color: #fff; flex: none; }
.bar.high > :not(.grip) { margin-bottom: 4px; }
.bar.high > input, .bar.high > select { margin-bottom: 2px; }
.bar.high > label { margin-bottom: 6px; }
.grip { width: 3px; height: 27px; margin-right: 6px; border: 1px solid #6b6b6b; border-left-color: #fff; border-top: 0; }
.push { margin-left: auto; }
.ic { width: 22px; height: 22px; }
.near { width: 18px; }
.rb { width: 20px; height: 20px; margin: 0 3px; border: 1px solid #6b6b6b; border-top-color: #fff; border-left-color: #fff; }
.rb.on { background: #fff; border-color: #a0a0a0 #fff #fff #a0a0a0; }
.glyph { color: #333; font: 9px/14px "Liberation Serif", serif; }
.dots { width: 12px; border: 1px dotted #333; line-height: 10px; }
.car { width: 9px; height: 22px; }
.car::before { content: ""; border: 3px solid transparent; border-top-color: #000; border-bottom: 0; }
.car.dim::before { border-width: 2px 2px 0; }
.sep { width: 1px; height: 16px; margin: 0 5px; border-left: 1px dotted #000; }
.off { color: #808080; }
.bar input, .bar select { height: 19px; padding: 1px 2px 0; border: 1px solid #f8f8f8; border-top-color: #a0a0a0; border-left-color: #a0a0a0; background: #fff; font: 12px/16px "Liberation Mono", monospace; appearance: none; }
.bar select, .bar input:disabled { background: #f0f0f0; opacity: 1; }
.bar select:disabled { color: #808080; }
.bar .runlen { width: 61px; margin-left: 3px; text-align: right; }
.spin { width: 14px; margin-right: 5px; }
.spin button { width: 14px; height: 9px; border: 1px solid #6b6b6b; border-top-color: #fff; border-left-color: #fff; }
.spin svg { width: 8px; height: 7px; }
.drop { display: flex; align-items: center; justify-content: center; width: 17px; height: 17px; margin-left: 3px; border: 1px solid #6b6b6b; border-top-color: #fff; border-left-color: #fff; }
.drop svg { width: 13px; height: 12px; }
.drop.off svg { width: 10px; height: 10px; opacity: .6; }
.help { width: 149px; }
.help label { width: 27px; margin-left: 4px; }
.bar .helpbox { width: 75px; margin-right: 5px; }
.layout { width: 207px; }
.layout label { width: 39px; margin-left: 4px; }
.laysel { width: 122px; }
.collayout { width: 333px; }
.collayout label { width: 73px; margin-left: 5px; }
.colsel { width: 213px; }
.search { width: 361px; }
.search label { width: 43px; margin-left: 6px; }
.searchbox { width: 115px; }
.search .drop { margin-right: 3px; }
.near + .ic:not(.near) { margin-left: 3px; }

/* wave window */
.window { flex: 1; display: flex; flex-direction: column; margin-top: 1px; padding: 1px 3px 3px 1px; border: 1px solid #a0a0a0; background: #fff; }
.caption { display: flex; align-items: center; height: 18px; padding: 0 2px 0 3px; background: #99b4d1; }
.caption h2 { margin: 0 6px 0 3px; }
.rail { flex: 1; height: 8px; border: solid #000; border-width: 2px 0; box-shadow: 0 -1px #cfefff; background: linear-gradient(#99b4d1 3px, #cfefff 3px); }
.nub { width: 18px; height: 8px; margin: 0 2px; background: conic-gradient(#000 25%, #99b4d1 0 50%, #fff 0 75%, #99b4d1 0) 0 0/4px 4px; }
.caption button { width: 10px; height: 11px; margin-left: 5px; background: #f0f0f0; border: 1px solid #6b6b6b; border-top-color: #fff; border-left-color: #fff; }
.caption svg.i16 { width: 15px; height: 15px; }
.caption button svg { width: 8px; height: 8px; }
.panes { flex: 1; display: flex; border: 1px solid #a0a0a0; border-width: 1px 0 0 1px; margin: 1px 0 0 1px; gap: 3px; }
.pane { display: flex; flex-direction: column; flex: none; color: #fff; box-shadow: 1px 0 #a0a0a0; }
.head { height: 19px; background: #808080; border-bottom: 1px solid #a0a0a0; }
.body { flex: 1; background: #808080; border-top: 2px solid #fff; border-bottom: 1px solid #a0a0a0; }
.foot { height: 42px; background: #808080; border-top: 2px solid #fff; border-bottom: 1px solid #a0a0a0; }
.scroll { height: 20px; background: #808080; border-top: 2px solid #fff; }
.names { width: 243px; }
.names .head { display: flex; align-items: center; padding-left: 8px; }
.names .head .car { margin-left: 3px; }
.names .body { border-left: 8px solid #fff; }
.body ul { padding-top: 1px; }
.names li { display: flex; align-items: center; justify-content: flex-start; height: 17px; padding-left: 19px; gap: 5px; white-space: nowrap; }
.names li:has(.ex) { padding-left: 5px; }
.ex { width: 9px; height: 9px; background: linear-gradient(#000, #000) 50% 50%/5px 1px no-repeat, linear-gradient(#000, #000) 50% 50%/1px 5px no-repeat, #fff; box-shadow: 9px 0 0 -4px #ddd; }
.endline { height: 2px; margin: 0 4px 0 2px; border-bottom: 1px solid #000; }
.msgs { width: 100px; }
.msgs .head { padding-right: 5px; text-align: right; }
.msgs li { padding-left: 2px; height: 17px; }
.now, .cur { display: flex; align-items: center; }
.now { height: 22px; }
.cur { height: 17px; background: #fff; color: #000; }
.now span, .cur span { flex: 1; text-align: right; padding-right: 9px; }
.trio { width: 36px; height: 14px; margin-left: 8px; }
.cur .trio { width: 48px; height: 17px; margin: 0; padding: 1px 1px 1px 9px; background: #808080; }
.waves { flex: 1; min-width: 0; }
.waves .head, .waves .body, .waves .foot { background: #000; position: relative; }
.waves .head > svg, .waves .body > svg, .waves .foot > svg { position: absolute; inset: 0; width: 100%; height: 100%; overflow: hidden; }
.strip { display: flex; height: 18px; border: 1px solid #808080; border-width: 1px 0; background: #f8f8f8; }
.names .strip { margin-left: 8px; }
.strip i { flex: 1; }
.strip button { width: 16px; background: #f0f0f0; border: 1px solid #909090; border-top-color: #fff; border-left-color: #fff; opacity: 1; }
.strip svg { opacity: .5; }
.strip svg, .hbar svg, .vbar svg { width: 8px; height: 8px; }
.hbar { display: flex; gap: 3px; height: 18px; padding: 1px 2px; border: 1px solid #808080; border-width: 1px 0; background: #ddd; }
.hbar button, .vbar button { width: 14px; height: 14px; background: #f0f0f0; border: 1px solid #808080; border-top-color: #fff; border-left-color: #fff; }
.thumb { position: relative; flex: 1; background: #f0f0f0; border: 1px solid #909090; border-top-color: #fff; border-left-color: #fff; }
.mark { position: absolute; left: 68%; top: 0; bottom: 0; width: 1px; background: #ffd000; }
.side { width: 17px; box-shadow: none; }
.side .body { border-top-color: #fff; background: #fff; display: flex; }
.vbar { flex: 1; display: flex; flex-direction: column; gap: 3px; align-items: stretch; padding: 1px; background: #ddd; border-left: 1px solid #a0a0a0; border-right: 1px solid #a0a0a0; }
.vbar button { width: auto; }

/* document tabs */
.tabs { display: flex; height: 20px; margin-top: 2px; }
.tab { justify-content: flex-start; height: 20px; padding: 0 5px 2px 7px; gap: 4px; background: #c8c8c8; border: 1px solid #000; border-left: 0; border-radius: 0 0 4px 4px; white-space: nowrap; }
.tab .cl { width: 8px; height: 8px; margin-left: auto; }
.tab.sel { background: #f0f0f0; border-top-color: #f0f0f0; padding-left: 6px; }
.tab:not(.sel) { padding-right: 3px; }
.wv { width: 73px; }
.tb { width: 125px; }
.tp { width: 109px; }
.ob { width: 81px; padding-left: 5px; }
.pr { width: 92px; padding-left: 4px; }
.lb { width: 77px; padding-left: 4px; }
.pj { width: 78px; padding-left: 4px; }
.sm { width: 59px; padding-left: 4px; }
.rest { flex: 1; border-top: 1px solid #000; }
.nudge { width: 10px; height: 16px; border: 1px solid #6b6b6b; border-top-color: #fff; border-left-color: #fff; }
.nudge svg { width: 7px; height: 8px; opacity: .7; }

/* status line */
.status { position: relative; display: flex; gap: 5px; height: 25px; padding: 3px 16px 2px 3px; line-height: 20px; }
.status span { border: 1px solid #fff; border-top-color: #a0a0a0; border-left-color: #a0a0a0; padding-left: 1px; white-space: nowrap; line-height: 18px; }
.status .c1 { width: 170px; padding-left: 5px; }
.c2 { width: 105px; }
.c3 { width: 197px; }
.c4 { flex: 1; }
.size { position: absolute; right: 0; bottom: 0; width: 12px; height: 12px; }
.mark-text { position: absolute; right: 14px; bottom: 4px; color: #8c8c8c; font: 300 20px/26px "Noto Sans CJK SC", sans-serif; text-shadow: 1px 1px #fff; white-space: nowrap; }
.mark-text small { font-size: 9px; }
```
